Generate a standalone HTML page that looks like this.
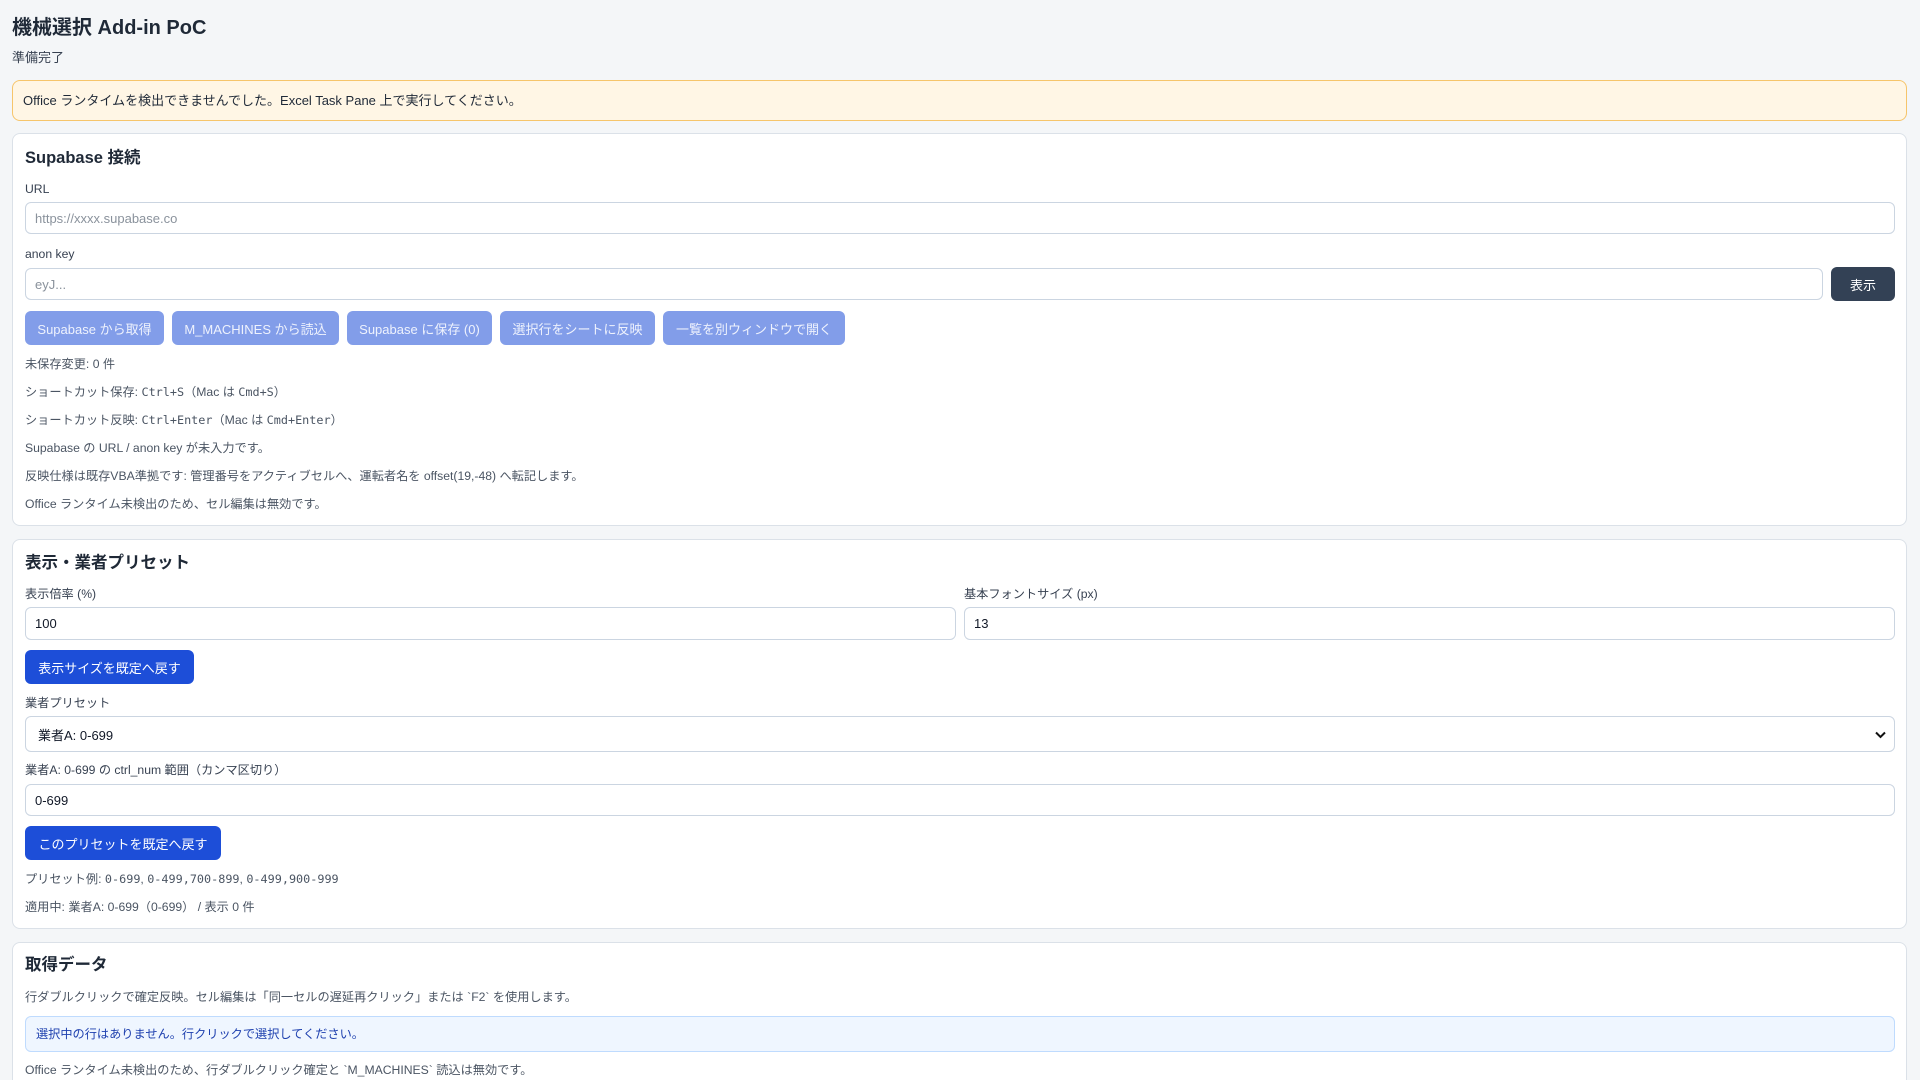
<!DOCTYPE html>
<html style="overflow:hidden;height:1080px"><head><meta charset="utf-8"><style>
*{box-sizing:border-box;margin:0;padding:0}
body{width:1920px;height:1080px;background:#f4f6f8;font-family:"Liberation Sans","Noto Sans CJK JP",sans-serif;color:#1f2937;position:relative;overflow:hidden}
.a{position:absolute}
.t{position:absolute;left:25px;line-height:16px;font-size:12.2px;color:#4b5563;white-space:nowrap}
.l{color:#374151}
.card{position:absolute;left:12px;width:1895px;background:#fff;border:1px solid #dbe1e8;border-radius:8px}
.h{position:absolute;left:25px;font-size:16.5px;font-weight:bold;line-height:20px;color:#1f2937}
.in{position:absolute;background:#fff;border:1px solid #cbd5e1;border-radius:6px;font-size:13px;padding-left:9px;display:flex;align-items:center;color:#111827}
.ph{color:#8a929c}
.btn{position:absolute;border-radius:6px;font-size:13px;color:#fff;display:flex;align-items:center;justify-content:center;white-space:nowrap}
.dis{background:#829de9;color:#eef2fd}
.pri{background:#1d4ed8}
code{font-family:"DejaVu Sans Mono","Liberation Mono",monospace;font-size:11.8px}
</style></head><body>
<div class="a" style="left:12px;top:16px;font-size:20px;font-weight:bold;line-height:24px;color:#1f2937">機械選択 Add-in PoC</div>
<div class="a" style="left:12px;top:50px;font-size:13px;line-height:16px;color:#374151">準備完了</div>
<div class="a" style="left:12px;top:80px;width:1895px;height:41px;background:#fff6e5;border:1px solid #f6c56b;border-radius:8px;font-size:13px;line-height:39px;padding-left:10px;color:#1f2937">Office ランタイムを検出できませんでした。Excel Task Pane 上で実行してください。</div>

<div class="card" style="top:133px;height:393px"></div>
<div class="h" style="top:148px">Supabase 接続</div>
<div class="t l" style="top:181px">URL</div>
<div class="in" style="left:25px;top:202px;width:1870px;height:32px"><span class="ph">https://xxxx.supabase.co</span></div>
<div class="t l" style="top:246px">anon key</div>
<div class="in" style="left:25px;top:268px;width:1798px;height:32px"><span class="ph">eyJ...</span></div>
<div class="btn" style="left:1831px;top:267px;width:64px;height:34px;background:#334155">表示</div>
<div class="btn dis" style="left:25px;top:311px;width:139px;height:34px">Supabase から取得</div>
<div class="btn dis" style="left:172px;top:311px;width:167px;height:34px">M_MACHINES から読込</div>
<div class="btn dis" style="left:347px;top:311px;width:145px;height:34px">Supabase に保存 (0)</div>
<div class="btn dis" style="left:500px;top:311px;width:155px;height:34px">選択行をシートに反映</div>
<div class="btn dis" style="left:663px;top:311px;width:182px;height:34px">一覧を別ウィンドウで開く</div>
<div class="t" style="top:356px">未保存変更: 0 件</div>
<div class="t" style="top:384px">ショートカット保存: <code>Ctrl+S</code>（Mac は <code>Cmd+S</code>）</div>
<div class="t" style="top:412px">ショートカット反映: <code>Ctrl+Enter</code>（Mac は <code>Cmd+Enter</code>）</div>
<div class="t" style="top:440px">Supabase の URL / anon key が未入力です。</div>
<div class="t" style="top:468px">反映仕様は既存VBA準拠です: 管理番号をアクティブセルへ、運転者名を offset(19,-48) へ転記します。</div>
<div class="t" style="top:496px">Office ランタイム未検出のため、セル編集は無効です。</div>

<div class="card" style="top:539px;height:390px"></div>
<div class="h" style="top:553px">表示・業者プリセット</div>
<div class="t l" style="top:586px">表示倍率 (%)</div>
<div class="t l" style="top:586px;left:964px">基本フォントサイズ (px)</div>
<div class="in" style="left:25px;top:607px;width:931px;height:33px">100</div>
<div class="in" style="left:964px;top:607px;width:931px;height:33px">13</div>
<div class="btn pri" style="left:25px;top:650px;width:169px;height:34px">表示サイズを既定へ戻す</div>
<div class="t l" style="top:695px">業者プリセット</div>
<div class="in" style="left:25px;top:716px;width:1870px;height:36px;padding-left:12px">業者A: 0-699<svg class="a" style="right:8px;top:14px" width="11" height="8" viewBox="0 0 11 8"><path d="M1 1.5l4.5 4.5 4.5-4.5" fill="none" stroke="#111" stroke-width="2"/></svg></div>
<div class="t l" style="top:762px">業者A: 0-699 の ctrl_num 範囲（カンマ区切り）</div>
<div class="in" style="left:25px;top:784px;width:1870px;height:32px">0-699</div>
<div class="btn pri" style="left:25px;top:826px;width:196px;height:34px">このプリセットを既定へ戻す</div>
<div class="t" style="top:871px">プリセット例: <code>0-699</code>, <code>0-499,700-899</code>, <code>0-499,900-999</code></div>
<div class="t" style="top:899px">適用中: 業者A: 0-699（0-699） / 表示 0 件</div>

<div class="card" style="top:942px;height:160px"></div>
<div class="h" style="top:955px">取得データ</div>
<div class="t" style="top:989px">行ダブルクリックで確定反映。セル編集は「同一セルの遅延再クリック」または `F2` を使用します。</div>
<div class="a" style="left:25px;top:1016px;width:1870px;height:36px;background:#eff6ff;border:1px solid #bfdbfe;border-radius:6px;font-size:12.2px;line-height:34px;padding-left:10px;color:#1e40af">選択中の行はありません。行クリックで選択してください。</div>
<div class="t" style="top:1062px">Office ランタイム未検出のため、行ダブルクリック確定と `M_MACHINES` 読込は無効です。</div>
</body></html>
